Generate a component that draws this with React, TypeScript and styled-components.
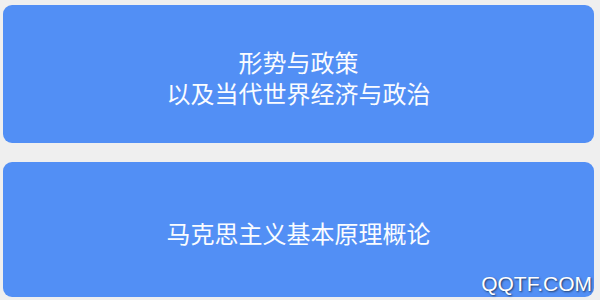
import React from 'react'
import styled, { createGlobalStyle } from 'styled-components'

const GlobalStyle = createGlobalStyle`
    html, body {
        margin: 0;
        padding: 0;
        background: #efefef;
    }
    body {
        font-family: "Noto Sans CJK SC", "Noto Sans", sans-serif;
    }
`
const Page = styled.div`
    position: relative;
    width: 600px;
    height: 300px;
    overflow: hidden;
    box-sizing: border-box;
    padding: 5px 6px 0 3px;
    display: flex;
    flex-direction: column;
    gap: 19px;
    background: #efefef;
`
const CourseCard = styled.div<{ $height: number }>`
    height: ${p => p.$height}px;
    flex-shrink: 0;
    border-radius: 9px;
    background: #528ff5;
    color: #fafcff;
    display: flex;
    flex-direction: column;
    align-items: center;
    justify-content: center;
    font-size: 24px;
    line-height: 31px;
    padding-top: 5px;
    box-sizing: border-box;
`
const TitleLine = styled.div`
    white-space: nowrap;
`
const Watermark = styled.div`
    position: absolute;
    right: 8px;
    bottom: 4px;
    font-family: "Liberation Sans", Arial, sans-serif;
    font-size: 21px;
    color: #ffffff;
    text-shadow: 1px 1px 2px rgba(0, 0, 0, 0.6);
`

const courses = [
    { lines: ['形势与政策', '以及当代世界经济与政治'], height: 138 },
    { lines: ['马克思主义基本原理概论'], height: 135 },
]

const App = () => {
    return (
        <>
            <GlobalStyle />
            <Page>
                {courses.map((c, i) => (
                    <CourseCard key={i} $height={c.height}>
                        {c.lines.map(l => <TitleLine key={l}>{l}</TitleLine>)}
                    </CourseCard>
                ))}
                <Watermark>QQTF.COM</Watermark>
            </Page>
        </>
    )
}

export default App
